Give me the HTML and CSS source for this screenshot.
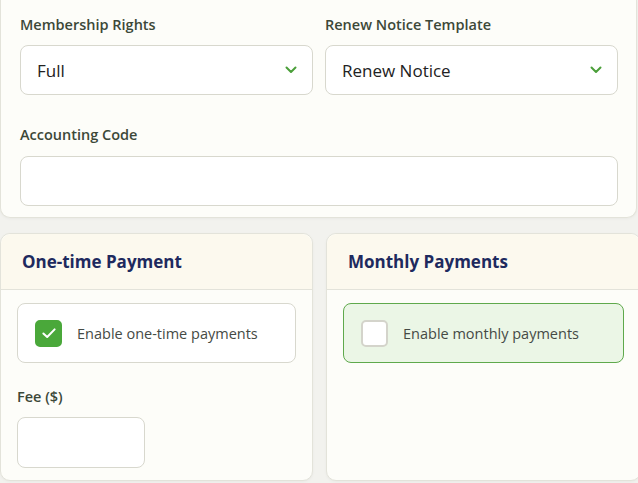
FILE: index.html
```html
<!DOCTYPE html>
<html lang="en">
<head>
  <meta charset="UTF-8">
  <meta name="viewport" content="width=device-width, initial-scale=1.0">
  <title>Membership Settings</title>
  <link rel="stylesheet" href="styles.css">
</head>
<body>
  <div class="panel top-panel">
    <div class="row">
      <div class="field">
        <label>Membership Rights</label>
        <div class="select">
          <span>Full</span>
          <svg class="chevron" viewBox="0 0 12 8" width="12" height="8"><path d="M1.5 1.5 6 6l4.5-4.5" fill="none" stroke="#4b9f3a" stroke-width="2" stroke-linecap="round" stroke-linejoin="round"/></svg>
        </div>
      </div>
      <div class="field">
        <label>Renew Notice Template</label>
        <div class="select">
          <span>Renew Notice</span>
          <svg class="chevron" viewBox="0 0 12 8" width="12" height="8"><path d="M1.5 1.5 6 6l4.5-4.5" fill="none" stroke="#4b9f3a" stroke-width="2" stroke-linecap="round" stroke-linejoin="round"/></svg>
        </div>
      </div>
    </div>
    <div class="field wide">
      <label>Accounting Code</label>
      <div class="input"></div>
    </div>
  </div>

  <div class="payments">
    <div class="panel pay-card">
      <div class="pay-head">One-time Payment</div>
      <div class="pay-body">
        <div class="toggle">
          <span class="box checked">
            <svg viewBox="0 0 16 16" width="18" height="18"><path d="M3 8.4 6.4 11.6 13 4.8" fill="none" stroke="#fff" stroke-width="1.8" stroke-linecap="round" stroke-linejoin="round"/></svg>
          </span>
          <span>Enable one-time payments</span>
        </div>
        <div class="field fee">
          <label>Fee ($)</label>
          <div class="input small"></div>
        </div>
      </div>
    </div>
    <div class="panel pay-card">
      <div class="pay-head">Monthly Payments</div>
      <div class="pay-body">
        <div class="toggle active">
          <span class="box"></span>
          <span>Enable monthly payments</span>
        </div>
      </div>
    </div>
  </div>
</body>
</html>
```

FILE: styles.css
```css
body {
  margin: 0;
  padding: 0;
  background-color: #f2f2ee;
  font-family: 'Open Sans', 'Noto Sans', sans-serif;
  overflow: hidden;
  width: 638px;
  height: 483px;
}
.panel {
  background-color: #fdfdf9;
  border: 1px solid #e3e3da;
  box-shadow: 0 1px 3px rgba(0, 0, 0, 0.04);
}
.top-panel {
  width: 598px;
  border-top: none;
  border-radius: 0 0 10px 10px;
  padding: 15px 18px 11px 19px;
}
.row {
  display: grid;
  grid-template-columns: 293px 293px;
  gap: 12px;
  margin-bottom: 30px;
}
.field label {
  display: block;
  font-size: 14.5px;
  line-height: 20px;
  font-weight: 600;
  color: #3c4838;
  margin-bottom: 10px;
}
.wide label {
  margin-bottom: 11px;
}
.select {
  height: 48px;
  border: 1px solid #d8d8ce;
  border-radius: 8px;
  background-color: #fff;
  display: flex;
  align-items: center;
  justify-content: space-between;
  padding: 0 15px 0 16px;
  font-size: 17px;
  color: #222;
}
.chevron {
  display: block;
}
.input {
  height: 48px;
  border: 1px solid #d8d8ce;
  border-radius: 8px;
  background-color: #fff;
}
.payments {
  display: grid;
  grid-template-columns: 313px 315px;
  gap: 13px;
  margin-top: 15px;
}
.pay-card {
  border-radius: 10px;
  min-height: 246px;
}
.pay-head {
  height: 55px;
  display: flex;
  align-items: center;
  padding: 0 21px;
  background-color: #fcf9ee;
  border-bottom: 1px solid #e3e3da;
  border-radius: 10px 10px 0 0;
  font-size: 17px;
  font-weight: 700;
  color: #1e2a5e;
}
.pay-body {
  padding: 13px 16px 12px 16px;
}
.toggle {
  height: 58px;
  border: 1px solid #d8d8ce;
  border-radius: 8px;
  background-color: #fff;
  display: flex;
  align-items: center;
  gap: 15px;
  padding: 0 17px;
  font-size: 14.5px;
  color: #454a45;
}
.toggle.active {
  background-color: #ebf6e6;
  border-color: #5fa94c;
}
.box {
  width: 23px;
  height: 23px;
  border: 2px solid #d4d4cb;
  border-radius: 5px;
  background-color: #fff;
  display: flex;
  align-items: center;
  justify-content: center;
  flex-shrink: 0;
}
.box.checked {
  background-color: #4aa83a;
  border-color: #4aa83a;
}
.fee {
  margin-top: 24px;
}
.small {
  width: 126px;
  height: 49px;
}
```
